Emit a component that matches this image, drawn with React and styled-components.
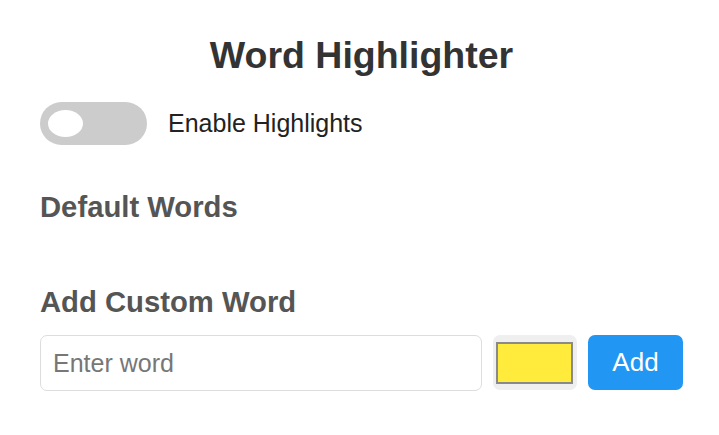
import React from "react";
import styled, { createGlobalStyle } from "styled-components";

const GlobalStyle = createGlobalStyle`
  body {
    margin: 0;
    background: #ffffff;
    font-family: "Liberation Sans", Arial, sans-serif;
  }
`;

const Container = styled.div`
  width: 643px;
  padding: 33px 36px 40px 40px;
  display: flex;
  flex-direction: column;
`;

const Title = styled.h1`
  margin: 0;
  font-size: 37.5px;
  line-height: 44px;
  font-weight: bold;
  color: #333333;
  text-align: center;
`;

const ToggleRow = styled.label`
  display: flex;
  align-items: center;
  gap: 21px;
  margin-top: 25px;
`;

const Track = styled.span`
  display: flex;
  align-items: center;
  width: 107px;
  height: 43px;
  padding-left: 8px;
  box-sizing: border-box;
  border-radius: 22px;
  background: ${(p) => (p.$on ? "#2196F3" : "#cccccc")};
`;

const Knob = styled.span`
  width: 35px;
  height: 27px;
  border-radius: 50%;
  background: #ffffff;
`;

const ToggleText = styled.span`
  font-size: 25px;
  line-height: 29px;
  color: #222222;
`;

const SectionTitle = styled.h3`
  margin: ${(p) => p.$top}px 0 0;
  font-size: 29.25px;
  line-height: 34px;
  font-weight: bold;
  color: #555555;
`;

const WordList = styled.div``;

const InputRow = styled.div`
  display: flex;
  gap: 11px;
  margin-top: 16px;
`;

const WordInput = styled.input`
  width: 442px;
  height: 56px;
  box-sizing: border-box;
  padding: 0 12px;
  border: 1.5px solid #dddddd;
  border-radius: 7px;
  font-family: "Liberation Sans", Arial, sans-serif;
  font-size: 25px;
  color: #333;
  outline: none;
  &::placeholder {
    color: #777777;
  }
`;

const ColorBox = styled.div`
  width: 84px;
  height: 55px;
  box-sizing: border-box;
  padding: 7px 4px 6px 3px;
  border-radius: 7px;
  background: #efefef;
`;

const Swatch = styled.div`
  width: 100%;
  height: 100%;
  box-sizing: border-box;
  border: 2px solid #8a8a8a;
  background: ${(p) => p.$color};
`;

const AddButton = styled.button`
  width: 95px;
  height: 55px;
  border: none;
  border-radius: 7px;
  background: #2196f3;
  color: #ffffff;
  font-family: "Liberation Sans", Arial, sans-serif;
  font-size: 26px;
  cursor: pointer;
`;

export default function App() {
  return (
    <>
      <GlobalStyle />
      <Container>
        <Title>Word Highlighter</Title>
        <ToggleRow>
          <Track $on={false}>
            <Knob />
          </Track>
          <ToggleText>Enable Highlights</ToggleText>
        </ToggleRow>
        <SectionTitle $top={45}>Default Words</SectionTitle>
        <WordList />
        <SectionTitle $top={61}>Add Custom Word</SectionTitle>
        <InputRow>
          <WordInput placeholder="Enter word" />
          <ColorBox>
            <Swatch $color="#ffeb3b" />
          </ColorBox>
          <AddButton>Add</AddButton>
        </InputRow>
      </Container>
    </>
  );
}
